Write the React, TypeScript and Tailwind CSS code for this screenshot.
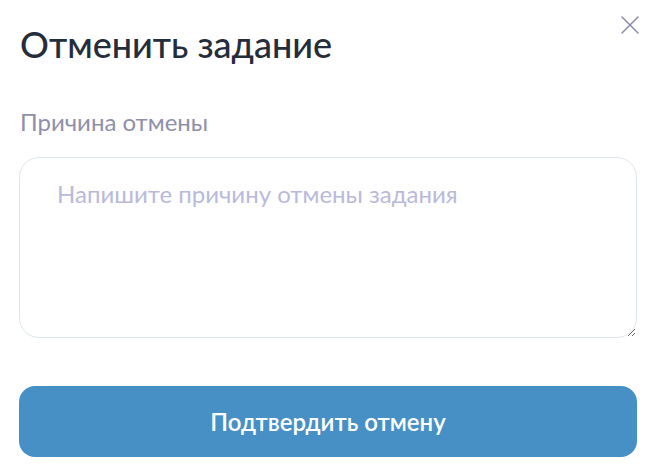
import { X } from "lucide-react";

export default function App() {
  return (
    <div className="relative min-h-[472px] w-[660px] bg-white pl-[19px] pr-[23px] pt-[22px] font-['Lato',sans-serif]">
      <button
        className="absolute right-[14px] top-[9px] text-[#8a8aa8]"
        aria-label="Закрыть"
      >
        <X size={32} strokeWidth={1.1} />
      </button>

      <h2 className="pl-[1px] text-[36px] font-medium leading-[44px] text-[#252d3b]">
        Отменить задание
      </h2>

      <label className="mt-[42px] block pl-[1px] text-[24px] leading-[28px] text-[#8f8fab]">
        Причина отмены
      </label>

      <textarea
        className="mt-[21px] block h-[181px] w-full resize-y rounded-[20px] border border-[#dde7ee] px-[37px] py-[22px] text-[24px] leading-[28px] text-[#252d3b] outline-none placeholder:text-[#b9badb]"
        placeholder="Напишите причину отмены задания"
      />

      <button className="mt-[48px] flex h-[71px] w-full items-center justify-center rounded-[16px] bg-[#4790c6] text-[24px] font-semibold text-white">
        Подтвердить отмену
      </button>
    </div>
  );
}
